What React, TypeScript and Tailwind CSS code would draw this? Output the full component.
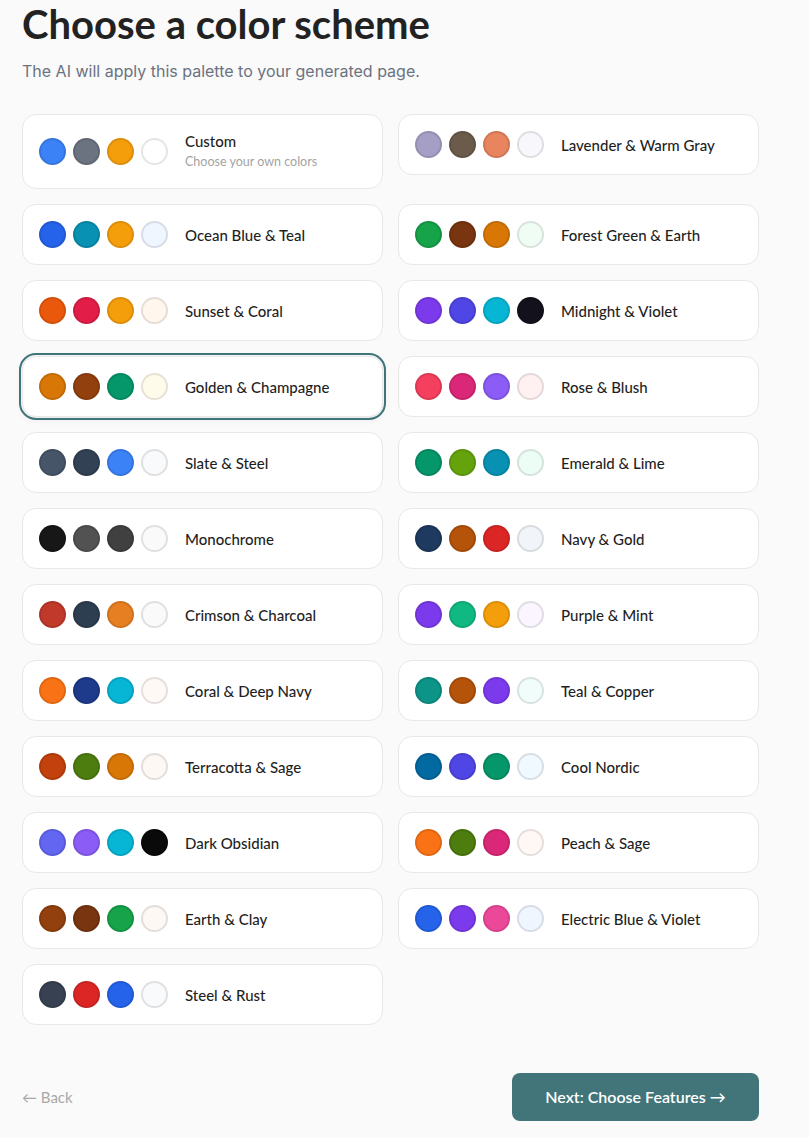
import React, {useState} from 'react';

type Scheme = {
  name: string;
  colors: string[];
  note?: string;
};

const schemes: Scheme[] = [
  {name: "Custom", note: "Choose your own colors", colors: ["#3b82f6", "#6b7280", "#f59e0b", "#ffffff"]},
  {name: "Lavender & Warm Gray", colors: ["#a59fc6", "#6b5b4b", "#e8845e", "#f8f8fc"]},
  {name: "Ocean Blue & Teal", colors: ["#2563eb", "#0891b2", "#f59e0b", "#eff6ff"]},
  {name: "Forest Green & Earth", colors: ["#16a34a", "#78350f", "#d97706", "#f0fdf4"]},
  {name: "Sunset & Coral", colors: ["#ea580c", "#e11d48", "#f59e0b", "#fff7ed"]},
  {name: "Midnight & Violet", colors: ["#7c3aed", "#4f46e5", "#06b6d4", "#13111c"]},
  {name: "Golden & Champagne", colors: ["#d97706", "#92400e", "#059669", "#fffbeb"]},
  {name: "Rose & Blush", colors: ["#f43f5e", "#db2777", "#8b5cf6", "#fff1f2"]},
  {name: "Slate & Steel", colors: ["#475569", "#334155", "#3b82f6", "#f8fafc"]},
  {name: "Emerald & Lime", colors: ["#059669", "#65a30d", "#0891b2", "#ecfdf5"]},
  {name: "Monochrome", colors: ["#171717", "#525252", "#404040", "#fafafa"]},
  {name: "Navy & Gold", colors: ["#1e3a5f", "#b45309", "#dc2626", "#f1f5f9"]},
  {name: "Crimson & Charcoal", colors: ["#c0392b", "#2c3e50", "#e67e22", "#fafafa"]},
  {name: "Purple & Mint", colors: ["#7c3aed", "#10b981", "#f59e0b", "#faf5ff"]},
  {name: "Coral & Deep Navy", colors: ["#f97316", "#1e3a8a", "#06b6d4", "#fef9f5"]},
  {name: "Teal & Copper", colors: ["#0d9488", "#b45309", "#7c3aed", "#f0fdfa"]},
  {name: "Terracotta & Sage", colors: ["#c2410c", "#4d7c0f", "#d97706", "#fdf8f3"]},
  {name: "Cool Nordic", colors: ["#0369a1", "#4f46e5", "#059669", "#f0f9ff"]},
  {name: "Dark Obsidian", colors: ["#6366f1", "#8b5cf6", "#06b6d4", "#0a0a0a"]},
  {name: "Peach & Sage", colors: ["#f97316", "#4d7c0f", "#db2777", "#fff8f5"]},
  {name: "Earth & Clay", colors: ["#92400e", "#78350f", "#16a34a", "#fdf8f3"]},
  {name: "Electric Blue & Violet", colors: ["#2563eb", "#7c3aed", "#ec4899", "#eff6ff"]},
  {name: "Steel & Rust", colors: ["#374151", "#dc2626", "#2563eb", "#f9fafb"]},
];

function SchemeCard({scheme, selected, onSelect}: {scheme: Scheme; selected: boolean; onSelect: () => void}) {
  return (
    <button
      onClick={onSelect}
      className={
        selected
          ? "flex items-center gap-[17px] px-4 py-4 min-h-[61px] bg-white border border-[#e8e8e8] rounded-[14px] text-left outline-2 outline-offset-[1px] outline-[#3f7478] shadow-[0_2px_8px_rgba(0,0,0,0.08)]"
          : "flex items-center gap-[17px] px-4 py-4 min-h-[61px] bg-white border border-[#e8e8e8] rounded-[14px] text-left"
      }
    >
      <div className="flex gap-[7px] shrink-0">
        {scheme.colors.map((c, i) => (
          <span
            key={i}
            className="block w-[27px] h-[27px] rounded-full border-2 border-black/10"
            style={{backgroundColor: c}}
          />
        ))}
      </div>
      <div className="flex flex-col">
        <span className="text-[15px] leading-5 font-medium text-[#1f1f1f]">{scheme.name}</span>
        {scheme.note && <span className="text-[12.5px] leading-5 text-[#a3a3a3] mt-[1px]">{scheme.note}</span>}
      </div>
    </button>
  );
}

export default function App() {
  const [selected, setSelected] = useState("Golden & Champagne");

  return (
    <div className="min-h-[1138px] bg-[#fafafa] pl-[22px] font-['Lato','Liberation_Sans',sans-serif]">
      <div className="w-[737px]">
        <h1 className="text-[40px] leading-[48px] font-bold text-[#222222]">Choose a color scheme</h1>
        <p className="mt-[11px] text-base leading-6 text-[#6b7280] font-['Inter',sans-serif]">
          The AI will apply this palette to your generated page.
        </p>

        <div className="mt-[31px] grid grid-cols-[361px_361px] gap-[15px] items-start">
          {schemes.map((s) => (
            <SchemeCard
              key={s.name}
              scheme={s}
              selected={selected === s.name}
              onSelect={() => setSelected(s.name)}
            />
          ))}
        </div>

        <div className="mt-12 flex items-center justify-between">
          <button className="text-[15px] text-[#a8a8a8]">← Back</button>
          <button className="w-[247px] h-12 rounded-lg bg-[#41757a] text-white text-base font-semibold">
            Next: Choose Features →
          </button>
        </div>
      </div>
    </div>
  );
}
